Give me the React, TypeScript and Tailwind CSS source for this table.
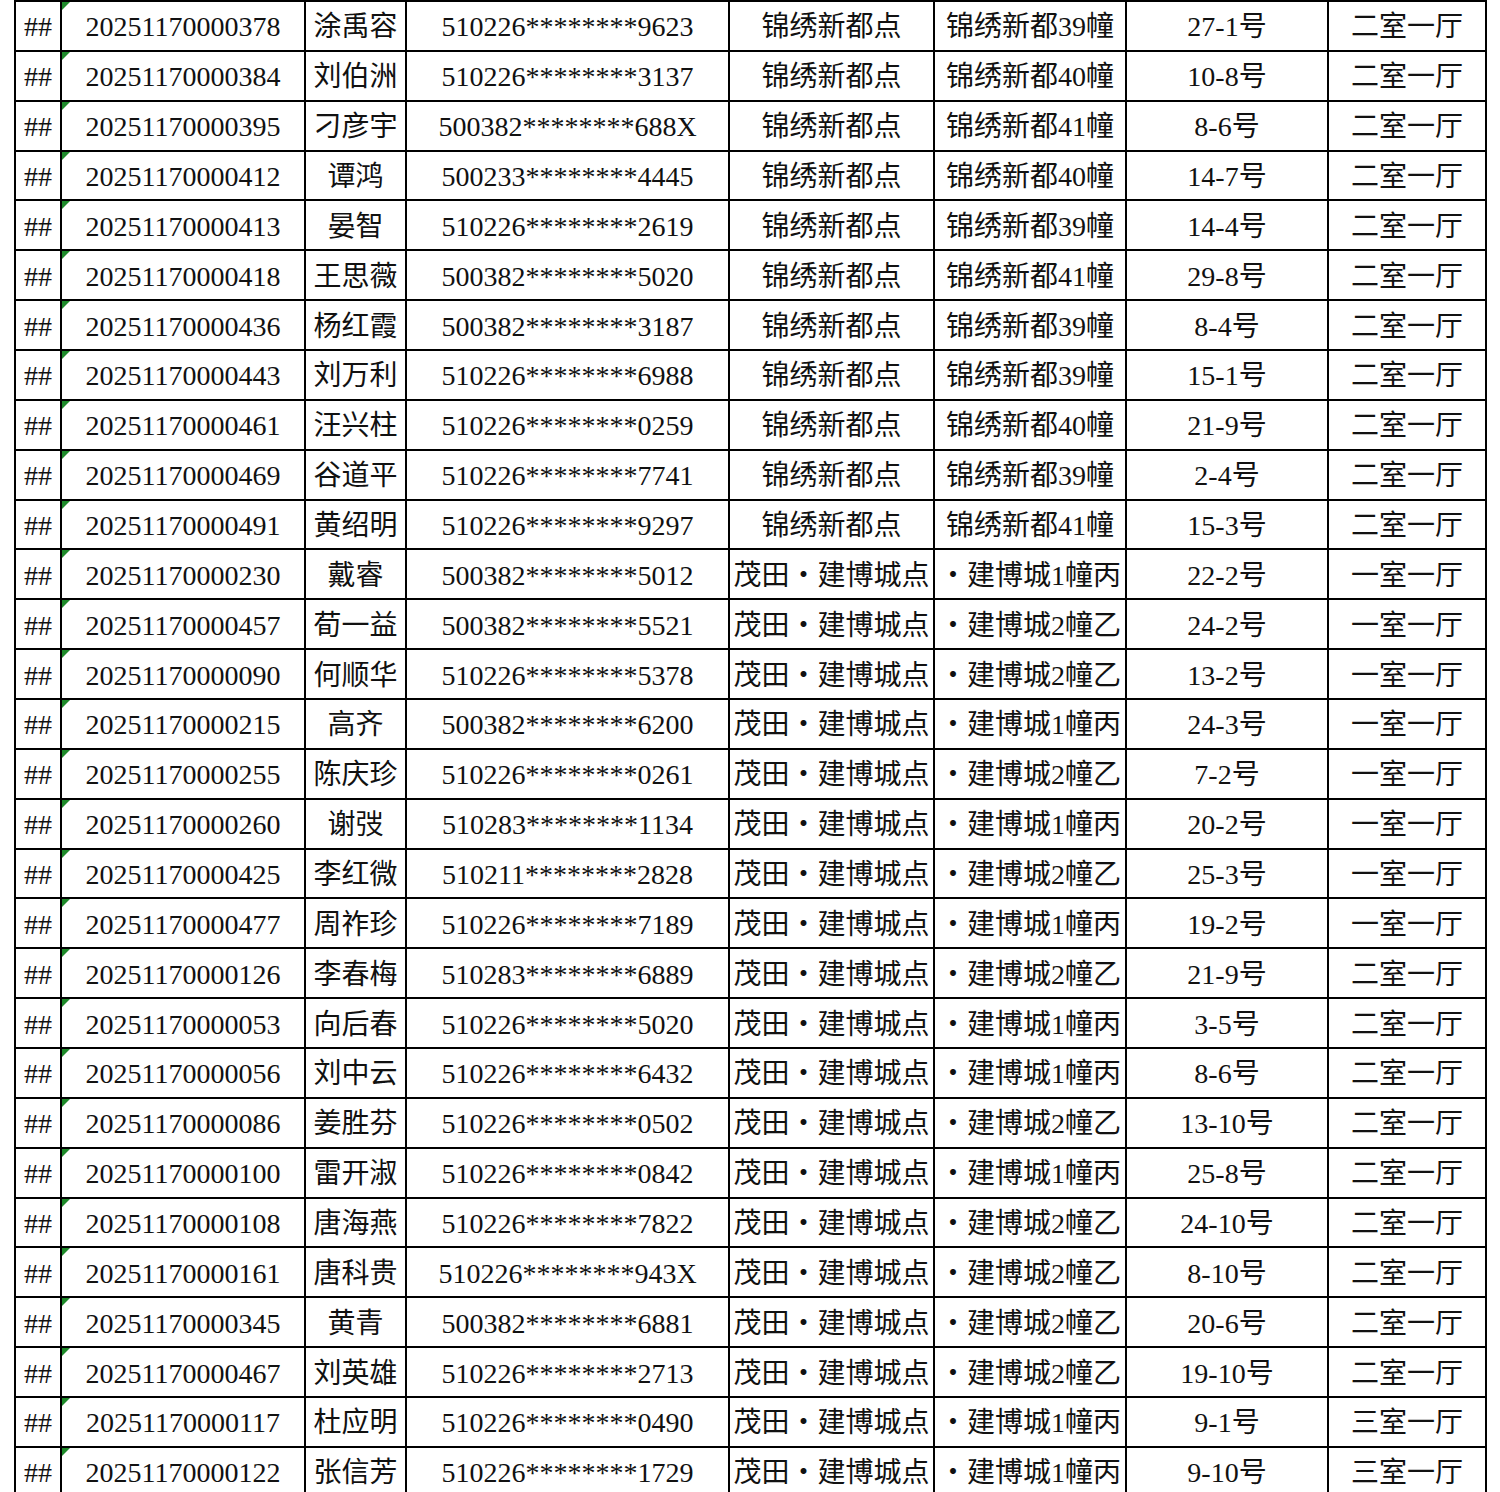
const rows: [string, string, string, string, string, string, string][] = [
  ["20251170000378", "涂禹容", "510226********9623", "锦绣新都点", "锦绣新都39幢", "27-1号", "二室一厅"],
  ["20251170000384", "刘伯洲", "510226********3137", "锦绣新都点", "锦绣新都40幢", "10-8号", "二室一厅"],
  ["20251170000395", "刁彦宇", "500382********688X", "锦绣新都点", "锦绣新都41幢", "8-6号", "二室一厅"],
  ["20251170000412", "谭鸿", "500233********4445", "锦绣新都点", "锦绣新都40幢", "14-7号", "二室一厅"],
  ["20251170000413", "晏智", "510226********2619", "锦绣新都点", "锦绣新都39幢", "14-4号", "二室一厅"],
  ["20251170000418", "王思薇", "500382********5020", "锦绣新都点", "锦绣新都41幢", "29-8号", "二室一厅"],
  ["20251170000436", "杨红霞", "500382********3187", "锦绣新都点", "锦绣新都39幢", "8-4号", "二室一厅"],
  ["20251170000443", "刘万利", "510226********6988", "锦绣新都点", "锦绣新都39幢", "15-1号", "二室一厅"],
  ["20251170000461", "汪兴柱", "510226********0259", "锦绣新都点", "锦绣新都40幢", "21-9号", "二室一厅"],
  ["20251170000469", "谷道平", "510226********7741", "锦绣新都点", "锦绣新都39幢", "2-4号", "二室一厅"],
  ["20251170000491", "黄绍明", "510226********9297", "锦绣新都点", "锦绣新都41幢", "15-3号", "二室一厅"],
  ["20251170000230", "戴睿", "500382********5012", "茂田・建博城点", "・建博城1幢丙", "22-2号", "一室一厅"],
  ["20251170000457", "荀一益", "500382********5521", "茂田・建博城点", "・建博城2幢乙", "24-2号", "一室一厅"],
  ["20251170000090", "何顺华", "510226********5378", "茂田・建博城点", "・建博城2幢乙", "13-2号", "一室一厅"],
  ["20251170000215", "高齐", "500382********6200", "茂田・建博城点", "・建博城1幢丙", "24-3号", "一室一厅"],
  ["20251170000255", "陈庆珍", "510226********0261", "茂田・建博城点", "・建博城2幢乙", "7-2号", "一室一厅"],
  ["20251170000260", "谢弢", "510283********1134", "茂田・建博城点", "・建博城1幢丙", "20-2号", "一室一厅"],
  ["20251170000425", "李红微", "510211********2828", "茂田・建博城点", "・建博城2幢乙", "25-3号", "一室一厅"],
  ["20251170000477", "周祚珍", "510226********7189", "茂田・建博城点", "・建博城1幢丙", "19-2号", "一室一厅"],
  ["20251170000126", "李春梅", "510283********6889", "茂田・建博城点", "・建博城2幢乙", "21-9号", "二室一厅"],
  ["20251170000053", "向后春", "510226********5020", "茂田・建博城点", "・建博城1幢丙", "3-5号", "二室一厅"],
  ["20251170000056", "刘中云", "510226********6432", "茂田・建博城点", "・建博城1幢丙", "8-6号", "二室一厅"],
  ["20251170000086", "姜胜芬", "510226********0502", "茂田・建博城点", "・建博城2幢乙", "13-10号", "二室一厅"],
  ["20251170000100", "雷开淑", "510226********0842", "茂田・建博城点", "・建博城1幢丙", "25-8号", "二室一厅"],
  ["20251170000108", "唐海燕", "510226********7822", "茂田・建博城点", "・建博城2幢乙", "24-10号", "二室一厅"],
  ["20251170000161", "唐科贵", "510226********943X", "茂田・建博城点", "・建博城2幢乙", "8-10号", "二室一厅"],
  ["20251170000345", "黄青", "500382********6881", "茂田・建博城点", "・建博城2幢乙", "20-6号", "二室一厅"],
  ["20251170000467", "刘英雄", "510226********2713", "茂田・建博城点", "・建博城2幢乙", "19-10号", "二室一厅"],
  ["20251170000117", "杜应明", "510226********0490", "茂田・建博城点", "・建博城1幢丙", "9-1号", "三室一厅"],
  ["20251170000122", "张信芳", "510226********1729", "茂田・建博城点", "・建博城1幢丙", "9-10号", "三室一厅"],
];

const cell =
  "flex items-center justify-center pt-[3px] border-l-2 border-black whitespace-nowrap overflow-hidden";

const App = () => {
  return (
    <div
      className="w-[1500px] h-[1492px] overflow-hidden bg-white pl-[14px] text-[28px] text-[#111]"
      style={{ fontFamily: '"Liberation Serif", "Noto Sans CJK SC", serif' }}
    >
      <div className="w-fit">
        {rows.map((r, i) => (
          <div
            key={i}
            className="grid h-[49.86px] grid-cols-[46px_244px_101px_323px_205px_192px_202px_160px] border-t-2 border-black"
          >
            {/* row marker */}
            <div className={cell}>##</div>

            {/* number stored as text, with the green corner mark */}
            <div className={`${cell} relative`}>
              <svg className="absolute left-0 top-0" width="8" height="8" viewBox="0 0 8 8">
                <polygon points="0,0 8,0 0,8" fill="#1e8a2a" />
              </svg>
              {r[0]}
            </div>

            <div className={cell}>{r[1]}</div>
            <div className={cell}>{r[2]}</div>
            <div className={cell}>{r[3]}</div>
            <div className={cell}>{r[4]}</div>
            <div className={cell}>{r[5]}</div>
            <div className={`${cell} border-r-2`}>{r[6]}</div>
          </div>
        ))}
      </div>
    </div>
  );
};

export default App;
